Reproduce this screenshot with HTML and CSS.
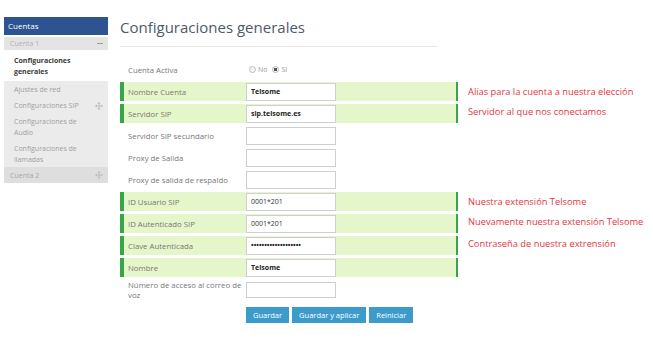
FILE: index.html
```html
<!DOCTYPE html>
<html lang="es">
<head>
    <meta charset="UTF-8">
    <title>Configuraciones generales</title>
    <link rel="stylesheet" href="styles.css">
</head>
<body>
    <div class="page">
        <div class="sidebar">
            <div class="side-head">Cuentas</div>
            <div class="side-group">
                <span>Cuenta 1</span>
                <span class="minus"></span>
            </div>
            <div class="side-item active"><span>Configuraciones generales</span></div>
            <div class="side-list">
                <div class="side-item"><span>Ajustes de red</span></div>
                <div class="side-item">
                    <span>Configuraciones SIP</span>
                    <svg class="move" viewBox="0 0 10 10"><path d="M5 1.5v7M1.5 5h7" stroke="#b8b8b8" stroke-width="1"/><path d="M5 0 3 2.2h4zM5 10 3 7.8h4zM0 5 2.2 3v4zM10 5 7.8 3v4z" fill="#b8b8b8"/></svg>
                </div>
                <div class="side-item"><span>Configuraciones de Audio</span></div>
                <div class="side-item"><span>Configuraciones de llamadas</span></div>
                <div class="side-group dark">
                    <span>Cuenta 2</span>
                    <svg class="move" viewBox="0 0 10 10"><path d="M5 1.5v7M1.5 5h7" stroke="#b8b8b8" stroke-width="1"/><path d="M5 0 3 2.2h4zM5 10 3 7.8h4zM0 5 2.2 3v4zM10 5 7.8 3v4z" fill="#b8b8b8"/></svg>
                </div>
            </div>
        </div>

        <div class="main">
            <h1>Configuraciones generales</h1>
            <form class="config">
                <div class="line">
                    <div class="field">
                        <label>Cuenta Activa</label>
                        <div class="radios">
                            <span class="radio"></span><span>No</span>
                            <span class="radio on"></span><span>SI</span>
                        </div>
                    </div>
                </div>
                <div class="line">
                    <div class="field mark">
                        <label>Nombre Cuenta</label>
                        <input type="text" value="Telsome">
                    </div>
                    <div class="note">Alias para la cuenta a nuestra elección</div>
                </div>
                <div class="line">
                    <div class="field mark">
                        <label>Servidor SIP</label>
                        <input type="text" value="sip.telsome.es">
                    </div>
                    <div class="note up">Servidor al que nos conectamos</div>
                </div>
                <div class="line">
                    <div class="field">
                        <label>Servidor SIP secundario</label>
                        <input type="text">
                    </div>
                </div>
                <div class="line">
                    <div class="field">
                        <label>Proxy de Salida</label>
                        <input type="text">
                    </div>
                </div>
                <div class="line">
                    <div class="field">
                        <label>Proxy de salida de respaldo</label>
                        <input type="text">
                    </div>
                </div>
                <div class="line">
                    <div class="field mark">
                        <label>ID Usuario SIP</label>
                        <input type="text" class="plain" value="0001*201">
                    </div>
                    <div class="note">Nuestra extensión Telsome</div>
                </div>
                <div class="line">
                    <div class="field mark">
                        <label>ID Autenticado SIP</label>
                        <input type="text" class="plain" value="0001*201">
                    </div>
                    <div class="note up">Nuevamente nuestra extensión Telsome</div>
                </div>
                <div class="line">
                    <div class="field mark">
                        <label>Clave Autenticada</label>
                        <input type="password" value="1234567890123456789">
                    </div>
                    <div class="note up">Contraseña de nuestra extrensión</div>
                </div>
                <div class="line">
                    <div class="field mark">
                        <label>Nombre</label>
                        <input type="text" value="Telsome">
                    </div>
                </div>
                <div class="line tall">
                    <div class="field">
                        <label>Número de acceso al correo de voz</label>
                        <input type="text">
                    </div>
                </div>
                <div class="buttons">
                    <button type="button">Guardar</button>
                    <button type="button">Guardar y aplicar</button>
                    <button type="button">Reiniciar</button>
                </div>
            </form>
        </div>
    </div>
</body>
</html>
```

FILE: styles.css
```css
body {
    margin: 0;
    font-family: "Open Sans", "Liberation Sans", sans-serif;
    background-color: #fff;
}

.page {
    display: flex;
    align-items: flex-start;
}

/* sidebar */

.sidebar {
    width: 104px;
    margin: 17px 0 0 4px;
    font-size: 7px;
}

.side-head {
    height: 18px;
    line-height: 18px;
    padding-left: 4px;
    background-color: #2d5391;
    color: #fff;
    font-size: 8px;
}

.side-group {
    display: flex;
    justify-content: space-between;
    align-items: center;
    height: 13px;
    margin-top: 2px;
    padding: 0 5px 0 6px;
    background-color: #e4e4e4;
    color: #b0b0b0;
}

.side-group.dark {
    height: 16px;
    margin-top: 0;
    background-color: #dedede;
    color: #a8a8a8;
}

.minus {
    width: 6px;
    height: 1px;
    background-color: #9a9a9a;
}

.move {
    width: 8px;
    height: 8px;
}

.side-item {
    display: flex;
    justify-content: space-between;
    align-items: center;
    padding: 3px 5px 2px 10px;
    line-height: 11px;
    color: #a0a0a0;
}

.side-item span {
    max-width: 76px;
}

.side-item.active {
    padding: 6px 10px 4px 10px;
    line-height: 10.5px;
    font-weight: bold;
    color: #3a3a3a;
}

.side-list {
    background-color: #ebebeb;
}

/* main */

.main {
    margin-left: 12px;
}

h1 {
    width: 317px;
    margin: 17px 0 13px 0;
    padding-bottom: 9px;
    border-bottom: 1px solid #e6e6e6;
    font-size: 15px;
    line-height: 20px;
    font-weight: normal;
    color: #4d5a6a;
}

.line {
    display: flex;
    align-items: center;
    height: 19px;
    margin-bottom: 3px;
}

.line.tall {
    height: 20px;
    margin-bottom: 7px;
}

.field {
    display: flex;
    align-items: center;
    width: 332px;
    height: 100%;
    border-left: 4px solid transparent;
    border-right: 2px solid transparent;
}

.field.mark {
    background-color: #e6f6cb;
    border-left-color: #38a548;
    border-right-color: #38a548;
}

label {
    width: 118px;
    padding-left: 4px;
    font-size: 7.8px;
    line-height: 10px;
    color: #777;
}

input {
    box-sizing: border-box;
    width: 90px;
    height: 18px;
    margin: 0;
    padding: 0 4px;
    border: 1px solid #cfcfcf;
    background-color: #fff;
    font-family: "Open Sans", "Liberation Sans", sans-serif;
    font-size: 7px;
    font-weight: bold;
    color: #222;
}

input.plain {
    font-weight: normal;
    color: #333;
}

.line.tall input {
    height: 16px;
}

.radios {
    display: flex;
    align-items: center;
    gap: 2px;
    font-size: 7px;
    color: #999;
    padding-left: 3px;
}

.radio {
    box-sizing: border-box;
    width: 7px;
    height: 7px;
    border: 1px solid #bbb;
    border-radius: 50%;
    background-color: #f4f4f4;
}

.radio.on {
    margin-left: 3px;
    background: radial-gradient(circle, #555 0 1.5px, #f4f4f4 2px);
}

.note {
    margin-left: 10px;
    font-size: 9.3px;
    color: #e3353f;
    white-space: nowrap;
}

.note.up {
    margin-top: -4px;
}

.buttons {
    display: flex;
    gap: 3px;
    margin-left: 126px;
}

button {
    height: 16px;
    padding: 0 7px;
    border: none;
    background-color: #3d9bcb;
    color: #fff;
    font-family: "Open Sans", "Liberation Sans", sans-serif;
    font-size: 7.5px;
}
```
